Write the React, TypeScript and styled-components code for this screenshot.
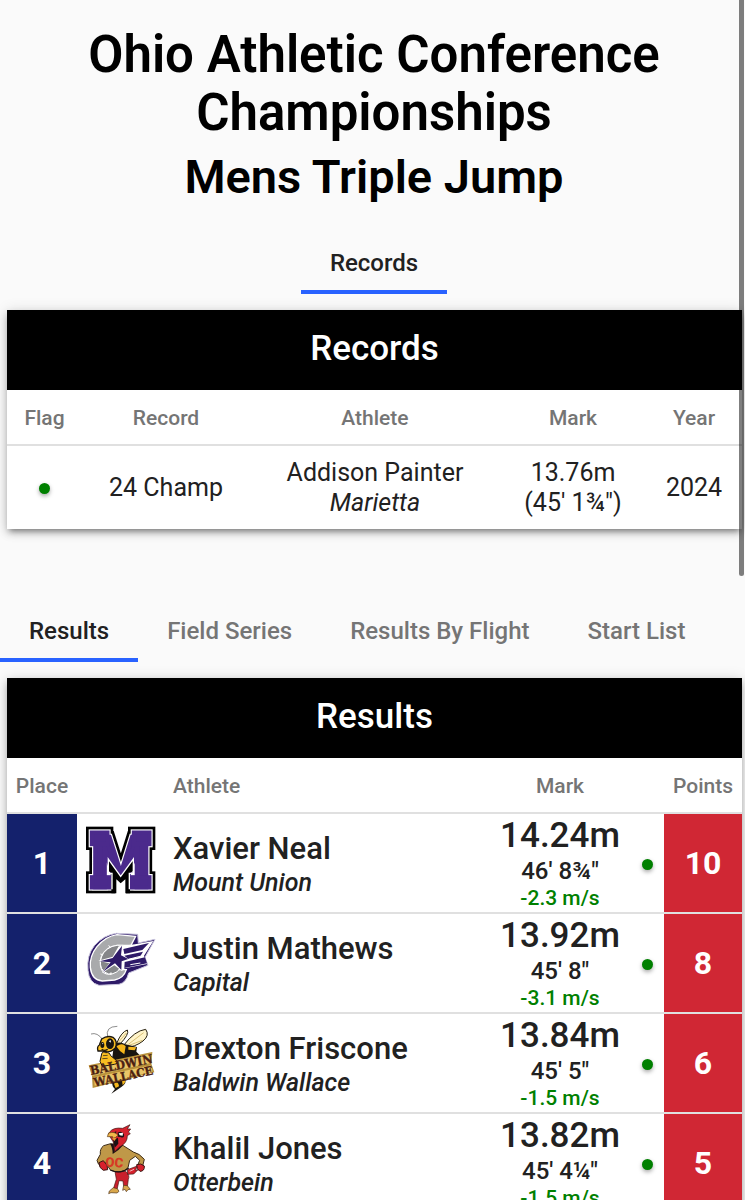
import React from "react";
import styled, { createGlobalStyle } from "styled-components";

const GlobalStyle = createGlobalStyle`
  *, *::before, *::after { box-sizing: border-box; }
  body {
    margin: 0;
    background: #fafafa;
    color: #212121;
    font-family: Roboto, sans-serif;
  }
`;

const Page = styled.div`
  position: relative;
  height: 100vh;
  overflow: hidden;
  background: #fafafa;
`;

const ScrollThumb = styled.div`
  position: absolute;
  top: 0;
  right: 1px;
  width: 5px;
  height: 48%;
  border-radius: 0 0 3px 3px;
  background: rgba(0, 0, 0, 0.5);
`;

const Heading = styled.header`
  padding: 26px 40px 0 43px;
  text-align: center;
  color: #000;
`;

const MeetTitle = styled.h1`
  margin: 0;
  font-size: 51px;
  line-height: 58px;
  font-weight: 600;
`;

const EventTitle = styled.h2`
  margin: 8px 0 0;
  font-size: 47px;
  line-height: 54px;
  font-weight: 600;
`;

const Tabs = styled.nav<{ $centered?: boolean; $top: number }>`
  display: flex;
  justify-content: ${(p) => (p.$centered ? "center" : "flex-start")};
  padding-left: ${(p) => (p.$centered ? 3 : 0)}px;
  margin-top: ${(p) => p.$top}px;
`;

const Tab = styled.button<{ $active?: boolean }>`
  height: 64px;
  padding: 6px 29px 0;
  border: 0;
  border-bottom: 4px solid ${(p) => (p.$active ? "#2962ff" : "transparent")};
  background: none;
  color: ${(p) => (p.$active ? "#212121" : "#757575")};
  font: 500 24px/54px Roboto, sans-serif;
  white-space: nowrap;
`;

const Card = styled.section`
  margin: 16px 3px 0 7px;
  background: #fff;
  box-shadow: 0 5px 5px -3px rgba(0, 0, 0, 0.3), 0 4px 8px rgba(0, 0, 0, 0.22),
    0 1px 14px rgba(0, 0, 0, 0.12);
`;

const CardTitle = styled.h3`
  margin: 0;
  height: 80px;
  background: #000;
  color: #fff;
  text-align: center;
  font-size: 35px;
  line-height: 78px;
  font-weight: 500;
`;

const Table = styled.table`
  width: 100%;
  border-collapse: collapse;
  table-layout: fixed;
`;

const Col = styled.col<{ $w?: string }>`
  width: ${(p) => p.$w ?? "auto"};
`;

const Th = styled.th<{ $start?: boolean }>`
  height: 55px;
  padding: 1px 0 0 ${(p) => (p.$start ? 10 : 0)}px;
  border-bottom: 2px solid #e0e0e0;
  color: #757575;
  text-align: ${(p) => (p.$start ? "left" : "center")};
  font-size: 21px;
  line-height: 28px;
  font-weight: 500;
`;

const RecordCell = styled.td`
  height: 84px;
  padding: 0;
  text-align: center;
  font-size: 25px;
  line-height: 30px;
`;

const Dot = styled.span`
  display: inline-block;
  width: 11px;
  height: 11px;
  border-radius: 50%;
  background: #008000;
  vertical-align: middle;
  box-shadow: 0 2px 4px rgba(0, 0, 0, 0.35);
`;

const Cell = styled.td`
  height: 100px;
  padding: 0;
  border-bottom: 2px solid #e0e0e0;
  text-align: center;
`;

const BadgeCell = styled(Cell)<{ $tone: "place" | "points" }>`
  background: ${(p) => (p.$tone === "place" ? "#14216c" : "#d02734")};
  color: #fff;
  font-size: 32px;
  font-weight: 700;
`;

const NameCell = styled(Cell)`
  padding: 5px 0 0 10px;
  text-align: left;
`;

const Name = styled.div`
  font-size: 31px;
  line-height: 34px;
  font-weight: 500;
`;

const School = styled.div`
  font-size: 25px;
  line-height: 34px;
  font-weight: 500;
  font-style: italic;
`;

const Metric = styled.div`
  font-size: 35px;
  line-height: 44px;
  font-weight: 500;
`;

const Imperial = styled.div`
  font-size: 24px;
  line-height: 26px;
  font-weight: 500;
`;

const Wind = styled.div`
  color: #008000;
  font-size: 21px;
  line-height: 28px;
  font-weight: 500;
`;

const Logo = styled.svg`
  display: block;
  width: 80px;
  height: 80px;
  margin: 0 auto;
  overflow: visible;
`;

const markLayers = [
  { stroke: "#000", width: 36 },
  { stroke: "#fff", width: 20 },
  { stroke: "#4b2a8c", width: 13 },
];

const MountUnionLogo = () => (
  <Logo viewBox="240 39 240 240" role="img" aria-label="Mount Union">
    {markLayers.map((l) => (
      <g key={l.width} fill={l.stroke} stroke={l.stroke} strokeWidth={l.width} strokeLinejoin="miter" strokeMiterlimit={2}>
        <text
          x="362"
          y="230"
          textAnchor="middle"
          fontFamily="Liberation Sans, sans-serif"
          fontWeight="700"
          fontSize="218"
        >
          M
        </text>
        <rect x="276" y="68" width="46" height="34" />
        <rect x="402" y="68" width="46" height="34" />
        <rect x="276" y="202" width="52" height="30" />
        <rect x="396" y="202" width="52" height="30" />
      </g>
    ))}
    <path d="M334 250 V188 L325 183 V147 L362 199 L400 147 V183 L390 188 V250 Z" fill="#000" />
    <path d="M336 238 V190 H325 V147 L362 199 L400 147 V190 H388 V238" fill="none" stroke="#fff" strokeWidth="4" />
    <path d="M349 254 V208 L362 220 L376 208 V254 Z" fill="#fff" />
  </Logo>
);

const CapitalLogo = () => (
  <Logo viewBox="15 24 240 240" role="img" aria-label="Capital">
    <path
      d="M188 58 L124 55 Q86 60 58 92 Q34 122 39 166 Q42 204 72 211 L132 208 Q154 203 161 174 L219 151 L210 127 L240 73 L190 84 Z"
      fill="#2e1a68"
      stroke="#c9c4dd"
      strokeWidth="3"
    />
    <path
      d="M182 64 L126 59 Q92 64 66 95 Q43 124 46 157 Q50 195 82 198 L119 195 Q146 190 154 164 L128 164 Q108 184 88 174 Q70 158 79 126 Q93 94 126 91 L168 91 Z"
      fill="#a9aaac"
      stroke="#fff"
      strokeWidth="4"
    />
    <path
      d="M145 91 Q107 87 86 113 Q70 139 80 161 Q98 188 127 170 L139 154 L139 111 Z"
      fill="#858689"
      stroke="#fff"
      strokeWidth="3"
    />
    <path
      d="M131 94 L180 88 L235 78 L207 122 L216 147 L149 160 L141 168 L118 151 L80 175 L103 145 L70 137 L113 125 Z"
      fill="#fff"
    />
    <path
      d="M141 92 L138 121 L160 132 L140 139 L139 165 L120 145 L84 170 L107 142 L74 139 L113 129 Z"
      fill="#2e1a68"
    />
    <path
      d="M145 102 L222 84 L202 105 L148 117 Z M148 122 L204 110 L195 125 L160 132 Z M149 141 L210 127 L216 145 L148 159 Z"
      fill="#2e1a68"
    />
    <path
      d="M160 133 L207 121 M166 149 L196 144 M106 97 L101 91 M83 119 L76 117 M108 172 L107 180"
      stroke="#fff"
      strokeWidth="3"
      fill="none"
    />
  </Logo>
);

const BaldwinWallaceLogo = () => (
  <Logo viewBox="15 24 240 240" role="img" aria-label="Baldwin Wallace">
    <g fill="none" stroke="#555" strokeWidth="2">
      <path d="M98 67 Q90 34 127 34" />
      <path d="M83 74 Q67 51 48 57" />
    </g>
    <path d="M126 83 Q139 51 157 45 Q164 57 134 88 Z" fill="#fff4c9" stroke="#27200f" strokeWidth="3" />
    <path d="M146 91 Q179 47 212 43 Q225 61 204 78 Q181 96 151 98 Z" fill="#fff4c9" stroke="#27200f" strokeWidth="3" />
    <path d="M160 88 L206 53 M160 92 L202 76 M130 82 L154 54" stroke="#c4a34a" strokeWidth="2" />
    <path d="M117 88 Q133 77 151 88 L186 96 L184 110 L193 119 L142 139 L111 134 Z" fill="#191510" />
    <path d="M130 91 Q143 83 152 94 L148 118 Q132 108 124 94 Z M160 95 L184 97 L179 106 L160 104 Z" fill="#f5b61c" />
    <path
      d="M80 72 Q97 60 114 67 Q129 78 121 99 Q105 116 83 108 L69 108 Q65 95 73 90 Z"
      fill="#f8bd21"
      stroke="#191510"
      strokeWidth="4"
    />
    <ellipse cx="105" cy="86" rx="12" ry="16" fill="#191510" />
    <ellipse cx="82" cy="90" rx="6" ry="9" fill="#191510" />
    <path d="M101 78 L108 76 L107 83 Z M81 84 L86 86 L82 88 Z" fill="#fff" />
    <path d="M80 103 Q88 109 98 103" fill="none" stroke="#191510" strokeWidth="4" />
    <path d="M111 197 L149 187 Q158 204 139 216 L109 236 L120 222 Q110 213 111 197 Z" fill="#191510" />
    <path d="M117 206 Q130 196 132 214 L122 219 Z M141 198 L151 191 Q153 202 143 210 Z" fill="#f5b61c" />
    <path d="M41 151 L232 111 L229 146 L238 172 L53 219 L51 184 Z" fill="#b8913a" />
    <path d="M46 154 L226 117 L224 145 L52 182 Z M57 187 L229 151 L232 170 L59 212 Z" fill="#e9c568" />
    <path
      d="M80 117 Q82 107 92 113 Q104 111 107 122 L124 136 Q131 146 118 148 L82 154 L75 139 Z"
      fill="#f8bd21"
      stroke="#191510"
      strokeWidth="3"
    />
    <path d="M84 122 L98 121 M82 131 L98 130" stroke="#191510" strokeWidth="2" />
    <g
      fill="#4c2112"
      stroke="#4c2112"
      strokeWidth="1"
      fontFamily="DejaVu Serif Condensed, DejaVu Serif, serif"
      fontWeight="700"
      textAnchor="middle"
    >
      <text x="139" y="162" fontSize="37" transform="rotate(-11 139 150)">
        BALDWIN
      </text>
      <text x="145" y="197" fontSize="36" transform="rotate(-12 145 184)">
        WALLACE
      </text>
    </g>
  </Logo>
);

const OtterbeinLogo = () => (
  <Logo viewBox="15 39 240 240" role="img" aria-label="Otterbein">
    <path d="M120 185 L152 184 Q166 196 160 208 L157 231 L146 229 L144 213 L132 212 L126 239 L115 237 L124 208 Z" fill="#c91f2c" stroke="#421710" strokeWidth="2" />
    <path d="M157 179 L187 168 L181 181 L189 179 L176 192 L158 193 Z" fill="#d6212d" stroke="#3a1713" strokeWidth="2" />
    <path d="M164 184 L177 178" stroke="#fff" strokeWidth="2" />
    <path
      d="M115 233 L127 236 L132 244 L126 249 L108 248 L101 251 L103 243 Z M146 226 L157 227 L166 238 L159 239 L154 245 L150 238 L143 241 Z"
      fill="#d9a74b"
      stroke="#4f341b"
      strokeWidth="2"
    />
    <path
      d="M107 101 L86 107 Q74 116 76 133 L66 151 Q68 164 80 171 L91 158 L107 181 Q140 194 159 173 L164 151 L181 139 L194 151 L188 166 L202 172 L208 148 Q193 130 175 126 L145 107 Z"
      fill="#bf9848"
      stroke="#3c2c18"
      strokeWidth="3"
    />
    <path d="M72 158 L85 152 L96 166 L98 179 L85 181 L75 172 Z M185 164 Q198 158 208 168 Q209 184 195 184 Q184 178 185 164 Z" fill="#d6212d" stroke="#3a1713" strokeWidth="3" />
    <path d="M105 101 L145 105 Q133 120 113 132 Q113 113 105 101 Z" fill="#1a1114" />
    <path
      d="M104 66 Q115 51 143 55 L165 44 L157 57 L167 57 L160 66 L166 71 L157 77 Q158 98 134 111 L119 125 L115 96 L100 73 Z"
      fill="#d6212d"
      stroke="#3a1713"
      strokeWidth="2"
    />
    <path d="M128 68 Q140 60 147 73 Q149 87 136 81 L129 80 Z M115 91 L129 83 L130 101 L119 113 Z M117 67 L124 64 L123 73 Z" fill="#1a1114" />
    <path d="M131 70 L144 68 L143 77 L134 76 Z" fill="#fff" />
    <path d="M101 69 Q120 63 129 76 Q122 85 111 85 L113 80 L97 80 Z" fill="#f2b84a" stroke="#5a3815" strokeWidth="2" />
    <path d="M111 85 L124 83 L119 93 Z" fill="#e69b32" />
    <text
      x="118"
      y="171"
      textAnchor="middle"
      fontFamily="Roboto, sans-serif"
      fontWeight="900"
      fontSize="40"
      fill="#d63a24"
      transform="rotate(4 116 160)"
    >
      OC
    </text>
    <path d="M106 180 Q137 194 161 174" stroke="#1a1114" strokeWidth="4" fill="none" />
  </Logo>
);

type Result = {
  place: number;
  name: string;
  school: string;
  metric: string;
  imperial: string;
  wind: string;
  points: number;
  Mark: React.FC;
};

const results: Result[] = [
  { place: 1, name: "Xavier Neal", school: "Mount Union", metric: "14.24m", imperial: "46' 8¾\"", wind: "-2.3 m/s", points: 10, Mark: MountUnionLogo },
  { place: 2, name: "Justin Mathews", school: "Capital", metric: "13.92m", imperial: "45' 8\"", wind: "-3.1 m/s", points: 8, Mark: CapitalLogo },
  { place: 3, name: "Drexton Friscone", school: "Baldwin Wallace", metric: "13.84m", imperial: "45' 5\"", wind: "-1.5 m/s", points: 6, Mark: BaldwinWallaceLogo },
  { place: 4, name: "Khalil Jones", school: "Otterbein", metric: "13.82m", imperial: "45' 4¼\"", wind: "-1.5 m/s", points: 5, Mark: OtterbeinLogo },
];

const resultTabs = ["Results", "Field Series", "Results By Flight", "Start List"];

export default function App() {
  return (
    <Page>
      <GlobalStyle />
      <Heading>
        <MeetTitle>Ohio Athletic Conference Championships</MeetTitle>
        <EventTitle>Mens Triple Jump</EventTitle>
      </Heading>

      <Tabs $centered $top={26}>
        <Tab $active>Records</Tab>
      </Tabs>
      <Card>
        <CardTitle>Records</CardTitle>
        <Table>
          <colgroup>
            <Col $w="75px" />
            <Col $w="168px" />
            <Col />
            <Col $w="146px" />
            <Col $w="96px" />
          </colgroup>
          <thead>
            <tr>
              <Th>Flag</Th>
              <Th>Record</Th>
              <Th>Athlete</Th>
              <Th>Mark</Th>
              <Th>Year</Th>
            </tr>
          </thead>
          <tbody>
            <tr>
              <RecordCell><Dot /></RecordCell>
              <RecordCell>24 Champ</RecordCell>
              <RecordCell>
                Addison Painter
                <br />
                <em>Marietta</em>
              </RecordCell>
              <RecordCell>
                13.76m
                <br />
                (45' 1¾")
              </RecordCell>
              <RecordCell>2024</RecordCell>
            </tr>
          </tbody>
        </Table>
      </Card>

      <Tabs $top={69}>
        {resultTabs.map((label, i) => (
          <Tab key={label} $active={i === 0}>{label}</Tab>
        ))}
      </Tabs>
      <Card>
        <CardTitle>Results</CardTitle>
        <Table>
          <colgroup>
            <Col $w="70px" />
            <Col $w="86px" />
            <Col />
            <Col $w="140px" />
            <Col $w="34px" />
            <Col $w="78px" />
          </colgroup>
          <thead>
            <tr>
              <Th>Place</Th>
              <Th />
              <Th $start>Athlete</Th>
              <Th>Mark</Th>
              <Th />
              <Th>Points</Th>
            </tr>
          </thead>
          <tbody>
            {results.map(({ Mark, ...r }) => (
              <tr key={r.place}>
                <BadgeCell $tone="place">{r.place}</BadgeCell>
                <Cell><Mark /></Cell>
                <NameCell>
                  <Name>{r.name}</Name>
                  <School>{r.school}</School>
                </NameCell>
                <Cell>
                  <Metric>{r.metric}</Metric>
                  <Imperial>{r.imperial}</Imperial>
                  <Wind>{r.wind}</Wind>
                </Cell>
                <Cell><Dot /></Cell>
                <BadgeCell $tone="points">{r.points}</BadgeCell>
              </tr>
            ))}
          </tbody>
        </Table>
      </Card>
      <ScrollThumb />
    </Page>
  );
}
